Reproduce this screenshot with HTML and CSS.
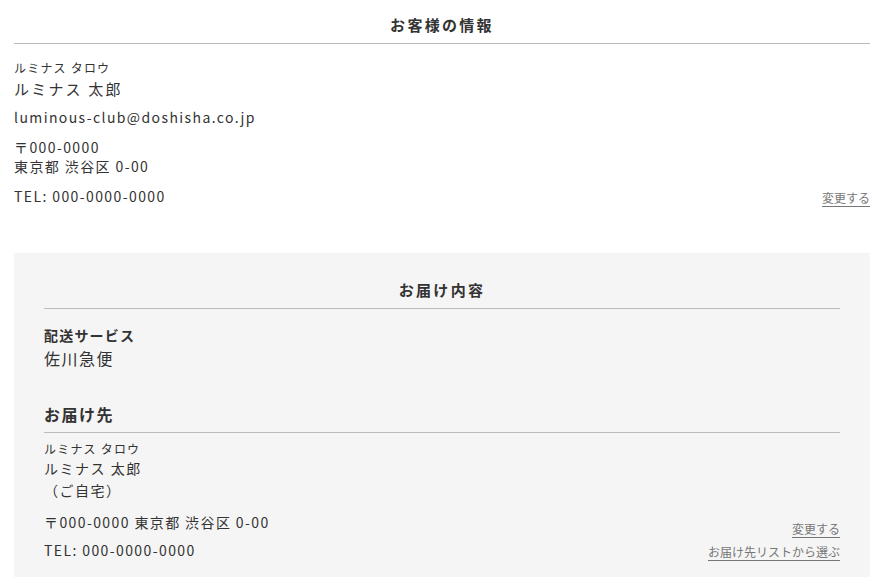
FILE: index.html
```html
<!DOCTYPE html>
<html lang="ja">
<head>
<meta charset="utf-8">
<link rel="stylesheet" href="styles.css">
</head>
<body>
<div class="page">
  <section class="customer">
    <h2 class="section-title">お客様の情報</h2>
    <div class="row">
      <div class="info">
        <p class="kana">ルミナス タロウ</p>
        <p class="name">ルミナス 太郎</p>
        <p class="email">luminous-club@doshisha.co.jp</p>
        <p class="addr">〒000-0000<br>東京都 渋谷区 0-00</p>
        <p class="tel">TEL: 000-0000-0000</p>
      </div>
      <div class="links">
        <a class="link" href="#">変更する</a>
      </div>
    </div>
  </section>

  <section class="delivery">
    <h2 class="section-title">お届け内容</h2>
    <h3 class="label">配送サービス</h3>
    <p class="service">佐川急便</p>
    <h3 class="sub-title">お届け先</h3>
    <div class="row">
      <div class="info">
        <p class="kana kana-d">ルミナス タロウ</p>
        <p class="name-d">ルミナス 太郎</p>
        <p class="name-d">（ご自宅）</p>
        <p class="addr-d">〒000-0000 東京都 渋谷区 0-00</p>
        <p class="tel-d">TEL: 000-0000-0000</p>
      </div>
      <div class="links links-d">
        <a class="link" href="#">変更する</a>
        <a class="link" href="#">お届け先リストから選ぶ</a>
      </div>
    </div>
  </section>
</div>
</body>
</html>
```
FILE: styles.css
```css
* { box-sizing: border-box; }
html, body { margin: 0; padding: 0; background: #fff; }
body {
  font-family: "Noto Sans CJK JP", "Noto Sans", sans-serif;
  color: #333;
}
p, h2, h3 { margin: 0; font-weight: normal; }
.page {
  width: 856px;
  margin-left: 14px;
}
.section-title {
  font-size: 15px;
  font-weight: bold;
  letter-spacing: 2.3px;
  line-height: 22px;
  text-align: center;
  padding: 14px 0 7px;
  border-bottom: 1px solid #bbb;
}
.row {
  display: flex;
  justify-content: space-between;
  align-items: flex-end;
}
.kana {
  font-size: 12px;
  line-height: 18px;
  letter-spacing: 1.2px;
  margin-top: 15px;
}
.name {
  font-size: 15px;
  line-height: 22px;
  letter-spacing: 2.2px;
  margin-top: 1px;
}
.email {
  font-size: 14px;
  line-height: 22px;
  letter-spacing: 1.4px;
  margin-top: 6px;
}
.addr {
  font-size: 14px;
  line-height: 19px;
  letter-spacing: 1.4px;
  margin-top: 10px;
}
.tel {
  font-size: 14px;
  line-height: 22px;
  letter-spacing: 1.4px;
  margin-top: 9px;
}
.links {
  display: flex;
  flex-direction: column;
  align-items: flex-end;
  gap: 6px;
  padding-bottom: 0;
}
.link {
  font-size: 12px;
  line-height: 16px;
  color: #777;
  text-decoration: none;
  border-bottom: 1px solid #777;
}
.delivery {
  margin-top: 46px;
  background: #f5f5f5;
  padding: 12px 30px 16px;
}
.label {
  font-size: 14px;
  font-weight: bold;
  letter-spacing: 1.2px;
  line-height: 22px;
  margin-top: 15px;
}
.service {
  font-size: 16px;
  line-height: 24px;
  letter-spacing: 1.5px;
}
.sub-title {
  font-size: 16px;
  font-weight: bold;
  letter-spacing: 1.5px;
  line-height: 24px;
  margin-top: 32px;
  padding-bottom: 6px;
  border-bottom: 1px solid #bbb;
}
.kana-d { margin-top: 8px; line-height: 16px; }
.name-d {
  font-size: 14px;
  line-height: 22px;
  letter-spacing: 1.5px;
}
.addr-d {
  font-size: 14px;
  line-height: 22px;
  letter-spacing: 1.4px;
  margin-top: 10px;
}
.tel-d {
  font-size: 14px;
  line-height: 22px;
  letter-spacing: 1.4px;
  margin-top: 6px;
}
```
